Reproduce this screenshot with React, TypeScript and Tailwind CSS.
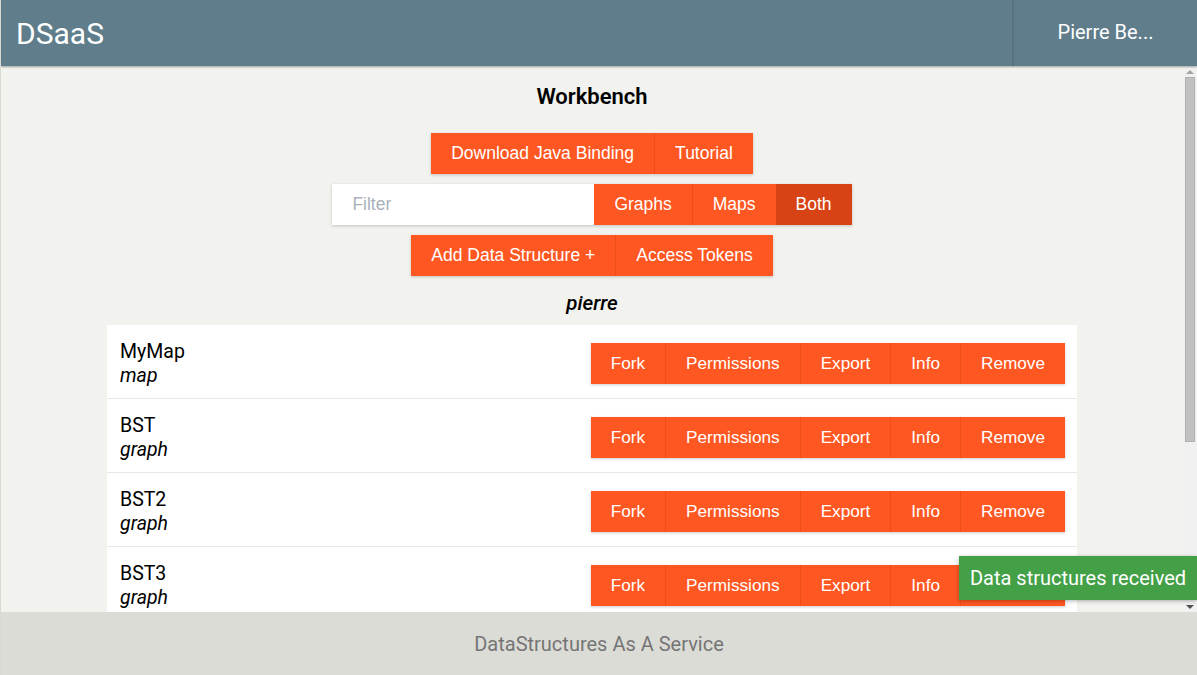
import React from 'react';

const rows = [
  { name: 'MyMap', kind: 'map' },
  { name: 'BST', kind: 'graph' },
  { name: 'BST2', kind: 'graph' },
  { name: 'BST3', kind: 'graph' },
];

const btnBase = "h-full flex items-center px-5 text-white text-[17.5px] font-['Liberation_Sans',Arial,sans-serif]";
const btn = `${btnBase} bg-[#ff5722]`;
const btnActive = `${btnBase} bg-[#d84315]`;
const rowBtn =
  "h-full flex items-center px-5 bg-[#ff5722] text-white text-[17.2px] font-['Liberation_Sans',Arial,sans-serif]";
const sep = 'border-l border-[#ec4d1a]';

export default function App() {
  return (
    <div className="h-screen w-full flex flex-col overflow-hidden border-l border-[#d9d9d4] bg-[#f2f2ee] font-['Roboto',sans-serif] relative">
      {/* Header */}
      <header className="h-[66px] shrink-0 flex bg-[#607d8b] text-white shadow-[0_1px_2px_rgba(0,0,0,0.35)] relative z-10">
        <div className="flex-1 flex items-center pl-[15px] text-[30px]">DSaaS</div>
        <div className="w-[185px] flex items-center justify-center border-l-2 border-[#57717e] text-[20px] pb-0.5">
          Pierre Be...
        </div>
      </header>

      {/* Main */}
      <div className="flex-1 flex min-h-0">
        <main className="flex-1 overflow-hidden flex flex-col items-center pt-[19px]">
          <h1 className="shrink-0 text-[22px] leading-6 font-semibold text-black">Workbench</h1>

          <div className="shrink-0 mt-6 h-[41px] flex shadow-[0_1px_3px_rgba(0,0,0,0.2)]">
            <button className={btn}>Download Java Binding</button>
            <button className={`${btn} ${sep}`}>Tutorial</button>
          </div>

          <div className="shrink-0 mt-[10px] h-[41px] flex shadow-[0_1px_3px_rgba(0,0,0,0.2)]">
            <input
              placeholder="Filter"
              className="w-[262px] h-full bg-white pl-5 text-[17.5px] outline-none placeholder:text-[#aab1bb] font-['Liberation_Sans',Arial,sans-serif]"
            />
            <button className={btn}>Graphs</button>
            <button className={`${btn} ${sep}`}>Maps</button>
            <button className={btnActive}>Both</button>
          </div>

          <div className="shrink-0 mt-[10px] h-[41px] flex shadow-[0_1px_3px_rgba(0,0,0,0.2)]">
            <button className={btn}>Add Data Structure +</button>
            <button className={`${btn} ${sep}`}>Access Tokens</button>
          </div>

          <div className="shrink-0 mt-[15px] mb-[10px] text-[20.5px] leading-6 italic font-medium text-black">pierre</div>

          <div className="shrink-0 w-[970px] bg-white">
            {rows.map((r, i) => (
              <div key={i} className="h-[74px] flex items-center justify-between pl-[13px] pr-3 pt-[4px] border-b border-[#e8e8e8]">
                <div className="text-[19.5px] leading-6 text-black">
                  <div>{r.name}</div>
                  <div className="italic">{r.kind}</div>
                </div>
                <div className="h-[41px] flex shadow-[0_1px_3px_rgba(0,0,0,0.2)]">
                  <button className={rowBtn}>Fork</button>
                  <button className={`${rowBtn} ${sep}`}>Permissions</button>
                  <button className={`${rowBtn} ${sep}`}>Export</button>
                  <button className={`${rowBtn} ${sep}`}>Info</button>
                  <button className={`${rowBtn} ${sep}`}>Remove</button>
                </div>
              </div>
            ))}
          </div>
        </main>

        {/* Scrollbar */}
        <div className="w-[14px] shrink-0 bg-[#f1f1f1] flex flex-col items-center">
          <div className="h-[11px] flex items-center justify-center">
            <div className="w-0 h-0 border-l-[4px] border-r-[4px] border-b-[4px] border-l-transparent border-r-transparent border-b-[#a3a3a3]" />
          </div>
          <div className="w-[10px] h-[365px] bg-[#c1c1c1] border border-[#b0b0b0]" />
          <div className="flex-1" />
          <div className="h-[11px] flex items-center justify-center">
            <div className="w-0 h-0 border-l-[4px] border-r-[4px] border-t-[4px] border-l-transparent border-r-transparent border-t-[#505050]" />
          </div>
        </div>
      </div>

      {/* Footer */}
      <footer className="h-[63px] shrink-0 bg-[#dcdcd7] flex items-center justify-center text-[20px] text-[#757575]">
        DataStructures As A Service
      </footer>

      {/* Toast */}
      <div className="absolute right-0 bottom-[75px] h-[44px] w-[238px] bg-[#43a047] text-white text-[20px] flex items-center justify-center shadow-[0_1px_4px_rgba(0,0,0,0.3)] z-20">
        Data structures received
      </div>
    </div>
  );
}
